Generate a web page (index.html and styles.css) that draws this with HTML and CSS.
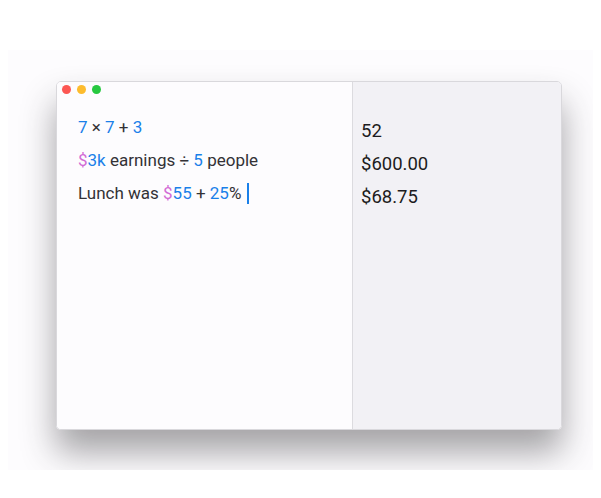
FILE: index.html
```html
<!DOCTYPE html>
<html lang="en">
  <head>
    <meta charset="UTF-8" />
    <meta name="viewport" content="width=device-width, initial-scale=1.0" />
    <title>Calculator Notes</title>
    <link rel="stylesheet" href="styles.css">
  </head>
  <body>
    <div class="frame">
      <div class="window">
        <div class="editor">
          <div class="lights">
            <span class="light red"></span>
            <span class="light yellow"></span>
            <span class="light green"></span>
          </div>
          <div class="lines">
            <div class="line"><span class="num">7</span> × <span class="num">7</span> + <span class="num">3</span></div>
            <div class="line"><span class="cur">$</span><span class="num">3k</span> earnings ÷ <span class="num">5</span> people</div>
            <div class="line">Lunch was <span class="cur">$</span><span class="num">55</span> + <span class="num">25</span>%<span class="caret"></span></div>
          </div>
        </div>
        <div class="results">
          <div class="line">52</div>
          <div class="line">$600.00</div>
          <div class="line">$68.75</div>
        </div>
      </div>
    </div>
  </body>
</html>
```

FILE: styles.css
```css
* {
  box-sizing: border-box;
}

body {
  margin: 0;
  padding-top: 50px;
  background: #fff;
  font-family: Roboto, "Liberation Sans", sans-serif;
}

.frame {
  margin: 0 8px;
  height: 420px;
  padding: 31px 31px 40px 48px;
  background: #fdfcfe;
  overflow: hidden;
}

.window {
  display: grid;
  grid-template-columns: 295px 1fr;
  height: 349px;
  border-radius: 5px;
  overflow: hidden;
  border: 1px solid #d9d8dc;
  box-shadow: 0 22px 34px rgba(40, 38, 44, 0.42);
}

.editor {
  background: #fdfcfe;
  padding: 3px 0 0 5px;
}

.lights {
  display: flex;
  gap: 6px;
}

.light {
  width: 9px;
  height: 9px;
  border-radius: 50%;
}

.red { background: #fc5753; }
.yellow { background: #fdbc2e; }
.green { background: #27c840; }

.lines {
  padding: 22px 0 0 16px;
}

.line {
  display: block;
  height: 33px;
  font-size: 17px;
  line-height: 22px;
  color: #333236;
  white-space: pre;
}

.num {
  color: #1a80e9;
}

.cur {
  color: #d26bd5;
}

.caret {
  display: inline-block;
  width: 2px;
  height: 21px;
  margin-left: 6px;
  vertical-align: -5px;
  background: #1a80e9;
}

.results {
  background: #f2f1f5;
  border-left: 1px solid #dcdbdf;
  padding: 38px 0 0 8px;
}

.results .line {
  font-size: 18.5px;
  color: #1d1c20;
}
```
